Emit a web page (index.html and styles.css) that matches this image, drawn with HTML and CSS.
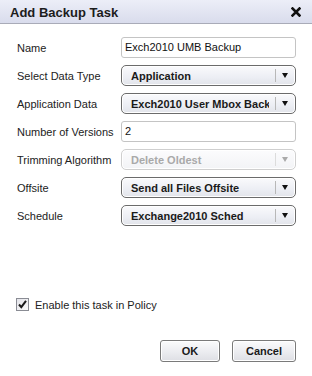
FILE: index.html
```html
<!DOCTYPE html>
<html lang="en">
<head>
    <meta charset="UTF-8">
    <title>Add Backup Task</title>
    <link rel="stylesheet" href="styles.css">
</head>
<body>
    <div class="dialog">
        <div class="titlebar">
            <span class="title">Add Backup Task</span>
            <svg class="close" width="10" height="10" viewBox="0 0 10 10">
                <path d="M1.5 1.5 L8.5 8.5 M8.5 1.5 L1.5 8.5" stroke="#111" stroke-width="2.6" stroke-linecap="square"/>
            </svg>
        </div>

        <div class="form">
            <div class="row">
                <label>Name</label>
                <div class="field">Exch2010 UMB Backup</div>
            </div>
            <div class="row">
                <label>Select Data Type</label>
                <div class="select"><span class="value">Application</span><span class="arrow"></span></div>
            </div>
            <div class="row">
                <label>Application Data</label>
                <div class="select"><span class="value">Exch2010 User Mbox Backup</span><span class="arrow"></span></div>
            </div>
            <div class="row">
                <label>Number of Versions</label>
                <div class="field">2</div>
            </div>
            <div class="row">
                <label>Trimming Algorithm</label>
                <div class="select disabled"><span class="value">Delete Oldest</span><span class="arrow"></span></div>
            </div>
            <div class="row">
                <label>Offsite</label>
                <div class="select"><span class="value">Send all Files Offsite</span><span class="arrow"></span></div>
            </div>
            <div class="row">
                <label>Schedule</label>
                <div class="select"><span class="value">Exchange2010 Sched</span><span class="arrow"></span></div>
            </div>
        </div>

        <div class="enable">
            <span class="checkbox">
                <svg width="11" height="11" viewBox="0 0 11 11">
                    <path d="M2 5.5 L4.3 8.2 L9 1.8" fill="none" stroke="#1a1a1a" stroke-width="2"/>
                </svg>
            </span>
            <span>Enable this task in Policy</span>
        </div>

        <div class="buttons">
            <button class="btn ok">OK</button>
            <button class="btn cancel">Cancel</button>
        </div>
    </div>
</body>
</html>
```

FILE: styles.css
```css
body {
    margin: 0;
    font-family: "Liberation Sans", Arial, sans-serif;
    font-size: 11px;
    color: #111;
    background: #fff;
}
.dialog {
    width: 312px;
    height: 376px;
    display: flex;
    flex-direction: column;
    box-sizing: border-box;
}
.titlebar {
    height: 23px;
    border-bottom: 1px solid #a9abb8;
    background: linear-gradient(to bottom, #eceef8, #d9dcec);
    display: flex;
    align-items: center;
    justify-content: space-between;
    padding: 0 11px 0 10px;
}
.title {
    font-weight: bold;
    font-size: 13px;
    color: #1c1c1c;
    padding-top: 1px;
}
.close {
    display: block;
}
.form {
    padding: 13px 16px 0 17px;
    display: flex;
    flex-direction: column;
    gap: 7px;
}
.row {
    display: grid;
    grid-template-columns: 104px minmax(0, 1fr);
    align-items: center;
    height: 21px;
}
.row label {
    color: #222;
}
.field {
    height: 21px;
    box-sizing: border-box;
    border: 1px solid #c4c4c4;
    border-radius: 3px;
    padding: 0 3px;
    line-height: 19px;
    font-size: 11px;
    color: #111;
}
.select {
    min-width: 0;
    height: 21px;
    box-sizing: border-box;
    border: 1px solid #6b6b6b;
    border-radius: 5px;
    background: linear-gradient(to bottom, #fafafc, #eceef4 60%, #e2e4ea);
    box-shadow: inset 0 0 0 1px #fff;
    display: flex;
    align-items: center;
    font-weight: bold;
    font-size: 11px;
    color: #1a1a1a;
}
.select .value {
    flex: 1;
    min-width: 0;
    padding-left: 9px;
    white-space: nowrap;
    overflow: hidden;
    margin-right: 6px;
}
.select .arrow {
    flex: none;
    width: 19px;
    height: 13px;
    border-left: 1px solid #b8b8b8;
    position: relative;
}
.select .arrow::after {
    content: "";
    position: absolute;
    left: 6px;
    top: 4px;
    border-left: 3.5px solid transparent;
    border-right: 3.5px solid transparent;
    border-top: 5px solid #111;
}
.select.disabled {
    border-color: #cfcfcf;
    color: #a9a9a9;
    background: linear-gradient(to bottom, #fcfcfd, #f2f3f6);
}
.select.disabled .arrow {
    border-left-color: #dcdcdc;
}
.select.disabled .arrow::after {
    border-top-color: #aaa;
}
.enable {
    margin-top: 72px;
    padding-left: 16px;
    display: flex;
    align-items: center;
    gap: 6px;
    color: #222;
}
.checkbox {
    width: 13px;
    height: 13px;
    box-sizing: border-box;
    border: 1px solid #8a8c94;
    background: linear-gradient(to bottom right, #e4e4ea, #fafafa);
    display: flex;
    align-items: center;
    justify-content: center;
}
.checkbox svg {
    display: block;
}
.buttons {
    margin-top: auto;
    margin-bottom: 14px;
    padding-right: 16px;
    display: flex;
    justify-content: flex-end;
    gap: 12px;
}
.btn {
    height: 22px;
    border: 1px solid #7a7a7a;
    border-radius: 3px;
    background: linear-gradient(to bottom, #fbfbfc, #ebecf0 55%, #dedfe4);
    box-shadow: inset 0 0 0 1px #fff;
    font-family: "Liberation Sans", Arial, sans-serif;
    font-weight: bold;
    font-size: 11px;
    color: #1a1a1a;
    padding: 0;
}
.ok {
    width: 60px;
}
.cancel {
    width: 64px;
}
```
